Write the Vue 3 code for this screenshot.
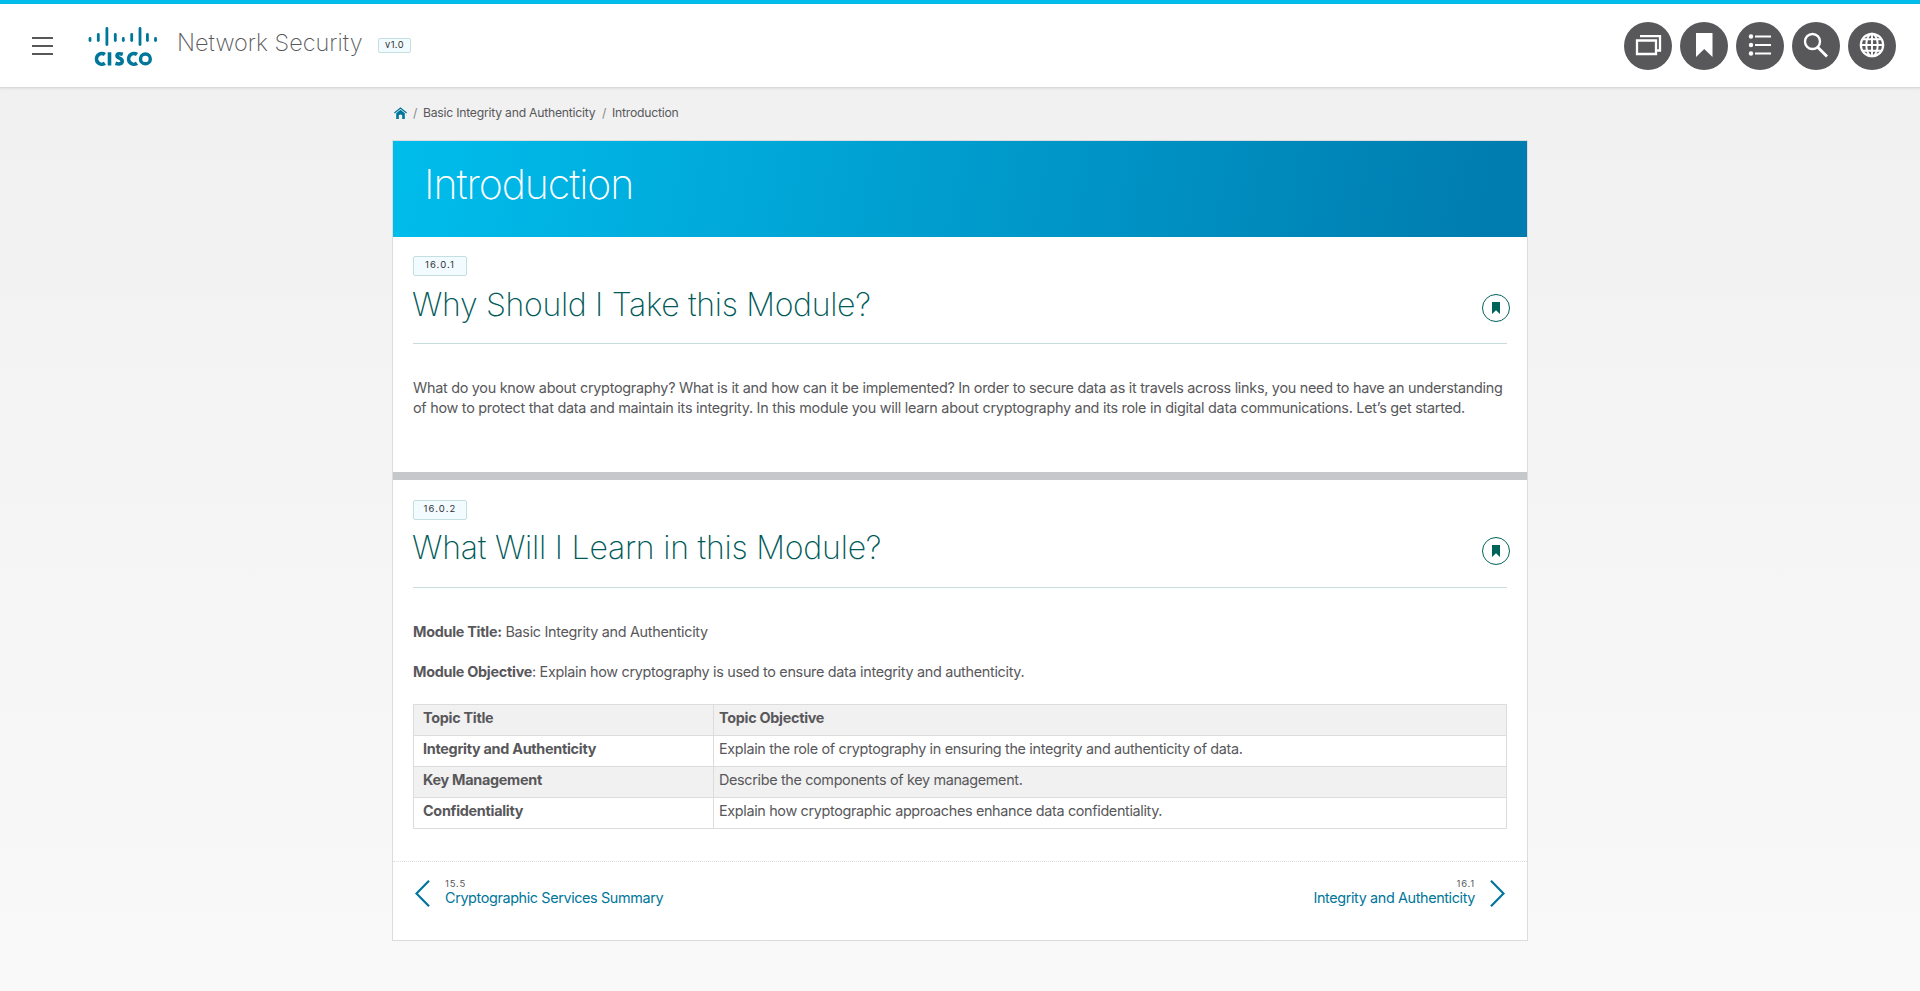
<script setup>
const tools = ['windows', 'bookmark', 'list', 'search', 'globe']
const bars = [
  [90, 37, 42], [98.3, 33, 42], [106.9, 27, 46], [115.3, 33, 42], [123.3, 37, 42],
  [131.7, 33, 42], [140, 27, 46], [147.4, 33, 42], [155.5, 37, 42],
]
const rows = [
  ['Topic Title', 'Topic Objective'],
  ['Integrity and Authenticity', 'Explain the role of cryptography in ensuring the integrity and authenticity of data.'],
  ['Key Management', 'Describe the components of key management.'],
  ['Confidentiality', 'Explain how cryptographic approaches enhance data confidentiality.'],
]
</script>

<template>
  <div class="page">
    <header class="topbar">
      <svg class="menu" width="21" height="18" viewBox="0 0 21 18"><path d="M0 1h21M0 9h21M0 17h21" stroke="#58585b" stroke-width="2" /></svg>
      <svg class="logo" width="70" height="42" viewBox="88 25 70 42" fill="none" stroke="#00769a">
        <path v-for="b in bars" :key="b[0]" :d="`M${b[0]} ${b[1] + 1.4}V${b[2] - 1.4}`" stroke-width="2.8" stroke-linecap="round" />
        <path stroke-width="3.6" d="M104.900 54.500A5.300 5.400 0 1 0 104.900 63.300M109.500 52.300V65.400M122.800 54.300C119.700 53.200 117 53.500 117 55.800C117 58.800 122.200 57.500 122.200 61.200C122.200 64.200 118.500 64.400 115.500 63.300M137 54.500A5.300 5.400 0 1 0 137 63.300" />
        <circle cx="145.4" cy="58.9" r="4.9" stroke-width="3.4" />
      </svg>
      <span class="course">Network Security</span>
      <span class="version">v1.0</span>
      <nav class="tools">
        <button v-for="t in tools" :key="t" class="tool">
          <svg width="48" height="48" viewBox="0 0 48 48" fill="none" stroke="#fff" stroke-width="2">
            <template v-if="t === 'windows'">
              <path d="M13 18.500h19v13.500h-19z" stroke-width="2.300" /><path d="M16 14.200h20v14.300h-3" stroke-width="2.300" />
            </template>
            <path v-else-if="t === 'bookmark'" d="M16 11h16.500v24l-8.250-8-8.250 8z" fill="#fff" stroke="none" />
            <template v-else-if="t === 'list'">
              <path d="M19 14.500h16M19 23h16M19 31.500h16" />
              <g fill="#fff" stroke="none"><circle cx="15" cy="14.500" r="2.200" /><circle cx="15" cy="23" r="2.200" /><circle cx="15" cy="31.500" r="2.200" /></g>
            </template>
            <template v-else-if="t === 'search'">
              <circle cx="20.500" cy="19.500" r="7.500" stroke-width="2.400" /><path d="M25.500 25l9.500 9.500" stroke-width="2.800" />
            </template>
            <template v-else>
              <circle cx="24" cy="23" r="11.200" stroke-width="2.200" /><ellipse cx="24" cy="23" rx="5.700" ry="11.200" />
              <path d="M24 12v22M13 23h22M15 17.300h18M15 28.700h18" stroke-width="1.900" />
            </template>
          </svg>
        </button>
      </nav>
    </header>

    <div class="crumbs">
      <svg width="13" height="12" viewBox="0 0 13 12"><path d="M0.400 6.100L6.500 1l6.100 5.100" fill="none" stroke="#00769a" stroke-width="1.300" /><path d="M2.200 6.300l4.300-3.500 4.300 3.500V12H8.200V8.300Q6.500 6.500 4.800 8.300V12H2.200z" fill="#00769a" /></svg>
      <i>/</i><span class="c1">Basic Integrity and Authenticity</span><i class="s2">/</i><span class="c2">Introduction</span>
    </div>

    <main class="card">
      <div class="banner"><h1>Introduction</h1></div>
      <section class="sec first">
        <span class="num">16.0.1</span>
        <div class="head">
          <h2 class="h-why">Why Should I Take this Module?</h2>
          <button class="mark"><svg width="8" height="12" viewBox="0 0 8 12"><path d="M0 0h8v12l-4-3.800-4 3.800z" fill="#00635a" /></svg></button>
        </div>
        <p class="l1">What do you know about cryptography? What is it and how can it be implemented? In order to secure data as it travels across links, you need to have an understanding</p>
        <p class="l2">of how to protect that data and maintain its integrity. In this module you will learn about cryptography and its role in digital data communications. Let’s get started.</p>
      </section>
      <section class="sec second">
        <span class="num">16.0.2</span>
        <div class="head">
          <h2 class="h-what">What Will I Learn in this Module?</h2>
          <button class="mark"><svg width="8" height="12" viewBox="0 0 8 12"><path d="M0 0h8v12l-4-3.800-4 3.800z" fill="#00635a" /></svg></button>
        </div>
        <p class="gap"><b>Module Title:</b> Basic Integrity and Authenticity</p>
        <p><b>Module Objective</b>: Explain how cryptography is used to ensure data integrity and authenticity.</p>
        <div class="table">
          <div v-for="(r, i) in rows" :key="i" class="row">
            <div class="cell k"><b>{{ r[0] }}</b></div>
            <div class="cell" :class="{ strong: i === 0 }">{{ r[1] }}</div>
          </div>
        </div>
      </section>
      <footer class="pager">
        <a class="prev">
          <svg width="15" height="27" viewBox="0 0 15 27"><path d="M14 0.800L1.500 13.500 14 26.200" fill="none" stroke="#00769a" stroke-width="2.200" /></svg>
          <span><small>15.5</small><em>Cryptographic Services Summary</em></span>
        </a>
        <a class="next">
          <span><small>16.1</small><em>Integrity and Authenticity</em></span>
          <svg width="15" height="27" viewBox="0 0 15 27"><path d="M1 0.800L13.500 13.500 1 26.200" fill="none" stroke="#00769a" stroke-width="2.200" /></svg>
        </a>
      </footer>
    </main>
  </div>
</template>

<style>
body { margin: 0; }
</style>

<style scoped>
.page { height: 991px; overflow: hidden; background: linear-gradient(#f0f0f0, #f9f9f9); font-family: Inter, "Liberation Sans", sans-serif; font-size: 14.4px; color: #58585b; }
.page * { box-sizing: border-box; }
button { border: 0; padding: 0; background: none; }
p, h1, h2 { margin: 0; white-space: nowrap; }
i, em { font-style: normal; }
b { font-weight: 700; letter-spacing: -.27px; }
.topbar { height: 88px; border-top: 4px solid #00bceb; border-bottom: 1px solid #d9d9db; background: #fff; box-shadow: 0 1px 2px rgba(0,0,0,.07); display: flex; align-items: flex-start; padding: 0 24px 0 32px; }
.menu { margin-top: 33px; flex: none; }
.logo { margin: 21px 0 0 35px; flex: none; }
.course { margin: 24px 0 0 19px; width: 200px; line-height: 30px; font-size: 23.5px; font-weight: 200; white-space: nowrap; }
.version { margin-top: 34px; width: 33px; height: 15px; border: 1px solid #c3dfdf; border-radius: 2px; background: #f2fbff; font-size: 9.3px; line-height: 12px; letter-spacing: .4px; text-align: center; color: #333; margin-left: 1px; }
.tools { margin: 18px 0 0 auto; display: flex; gap: 8px; }
.tool { width: 48px; height: 48px; border-radius: 50%; background: #58585b; }
.tool svg { display: block; }
.crumbs { width: 1136px; margin: 0 auto; height: 52px; padding: 19px 0 0 2px; display: flex; align-items: flex-start; font-size: 12.2px; line-height: 12px; letter-spacing: -.23px; white-space: nowrap; }
.crumbs i { width: 10px; margin-left: 6px; color: #888; }
.c1 { width: 173px; }
.crumbs .s2 { width: 10px; margin-left: 6px; }
.card { width: 1136px; height: 801px; margin: 0 auto; border: 1px solid #dcdcde; background: #fff; }
.banner { height: 96px; background: linear-gradient(100deg, #00bceb 2%, #007db0 96%); padding: 19px 0 0 31px; }
h1 { font-size: 41px; font-weight: 200; line-height: 48px; letter-spacing: -1.05px; color: #fff; }
.sec { padding: 0 20px; }
.first { height: 243px; padding-top: 19px; border-bottom: 8px solid #c6c7ca; }
.second { padding-top: 20px; height: 381px; }
.num { display: block; width: 54px; height: 20px; border: 1px solid #c3dfdf; border-radius: 2px; background: #f2fbff; color: #333; font-size: 9.5px; line-height: 16px; letter-spacing: 1.1px; text-align: center; }
.head { height: 68px; border-bottom: 1px solid #c8dcdb; display: flex; justify-content: space-between; padding-top: 9px; margin-bottom: 34px; }
.second .head { padding-top: 8px; }
h2 { font-size: 32px; line-height: 40px; font-weight: 200; color: #005a58; margin-left: -1px; }
.h-why { letter-spacing: -.3px; }
.h-what { letter-spacing: -.2px; }
.mark { width: 28px; height: 28px; margin: 9px -3px 0 0; border: 1.300px solid #00635a; border-radius: 50%; display: flex; align-items: center; justify-content: center; }
p { line-height: 20px; letter-spacing: -.31px; }
.l1 { letter-spacing: -.278px; }
.l2 { letter-spacing: -.268px; }
.gap { margin-bottom: 20px; }
.table { margin-top: 22px; border: 1px solid #dcdcde; border-bottom: 0; }
.row { display: flex; height: 31px; border-bottom: 1px solid #dcdcde; }
.row:nth-child(odd) { background: #f1f1f1; }
.cell { padding-left: 5px; line-height: 26px; white-space: nowrap; letter-spacing: -.34px; }
.k { width: 300px; padding-left: 9px; border-right: 1px solid #dcdcde; }
.k b, .strong { font-weight: 700; letter-spacing: -.28px; }
.pager { border-top: 1px dotted #dcdcde; display: flex; justify-content: space-between; padding: 18px 22px 0 22px; }
.prev, .next { display: flex; color: #00769a; }
.prev span { margin: -1px 0 0 15px; }
.next span { margin: -1px 15px 0 0; text-align: right; }
small, em { display: block; white-space: nowrap; }
small { font-size: 9.5px; line-height: 9px; color: #58585b; letter-spacing: .8px; }
em { line-height: 20px; letter-spacing: -.38px; }
</style>
